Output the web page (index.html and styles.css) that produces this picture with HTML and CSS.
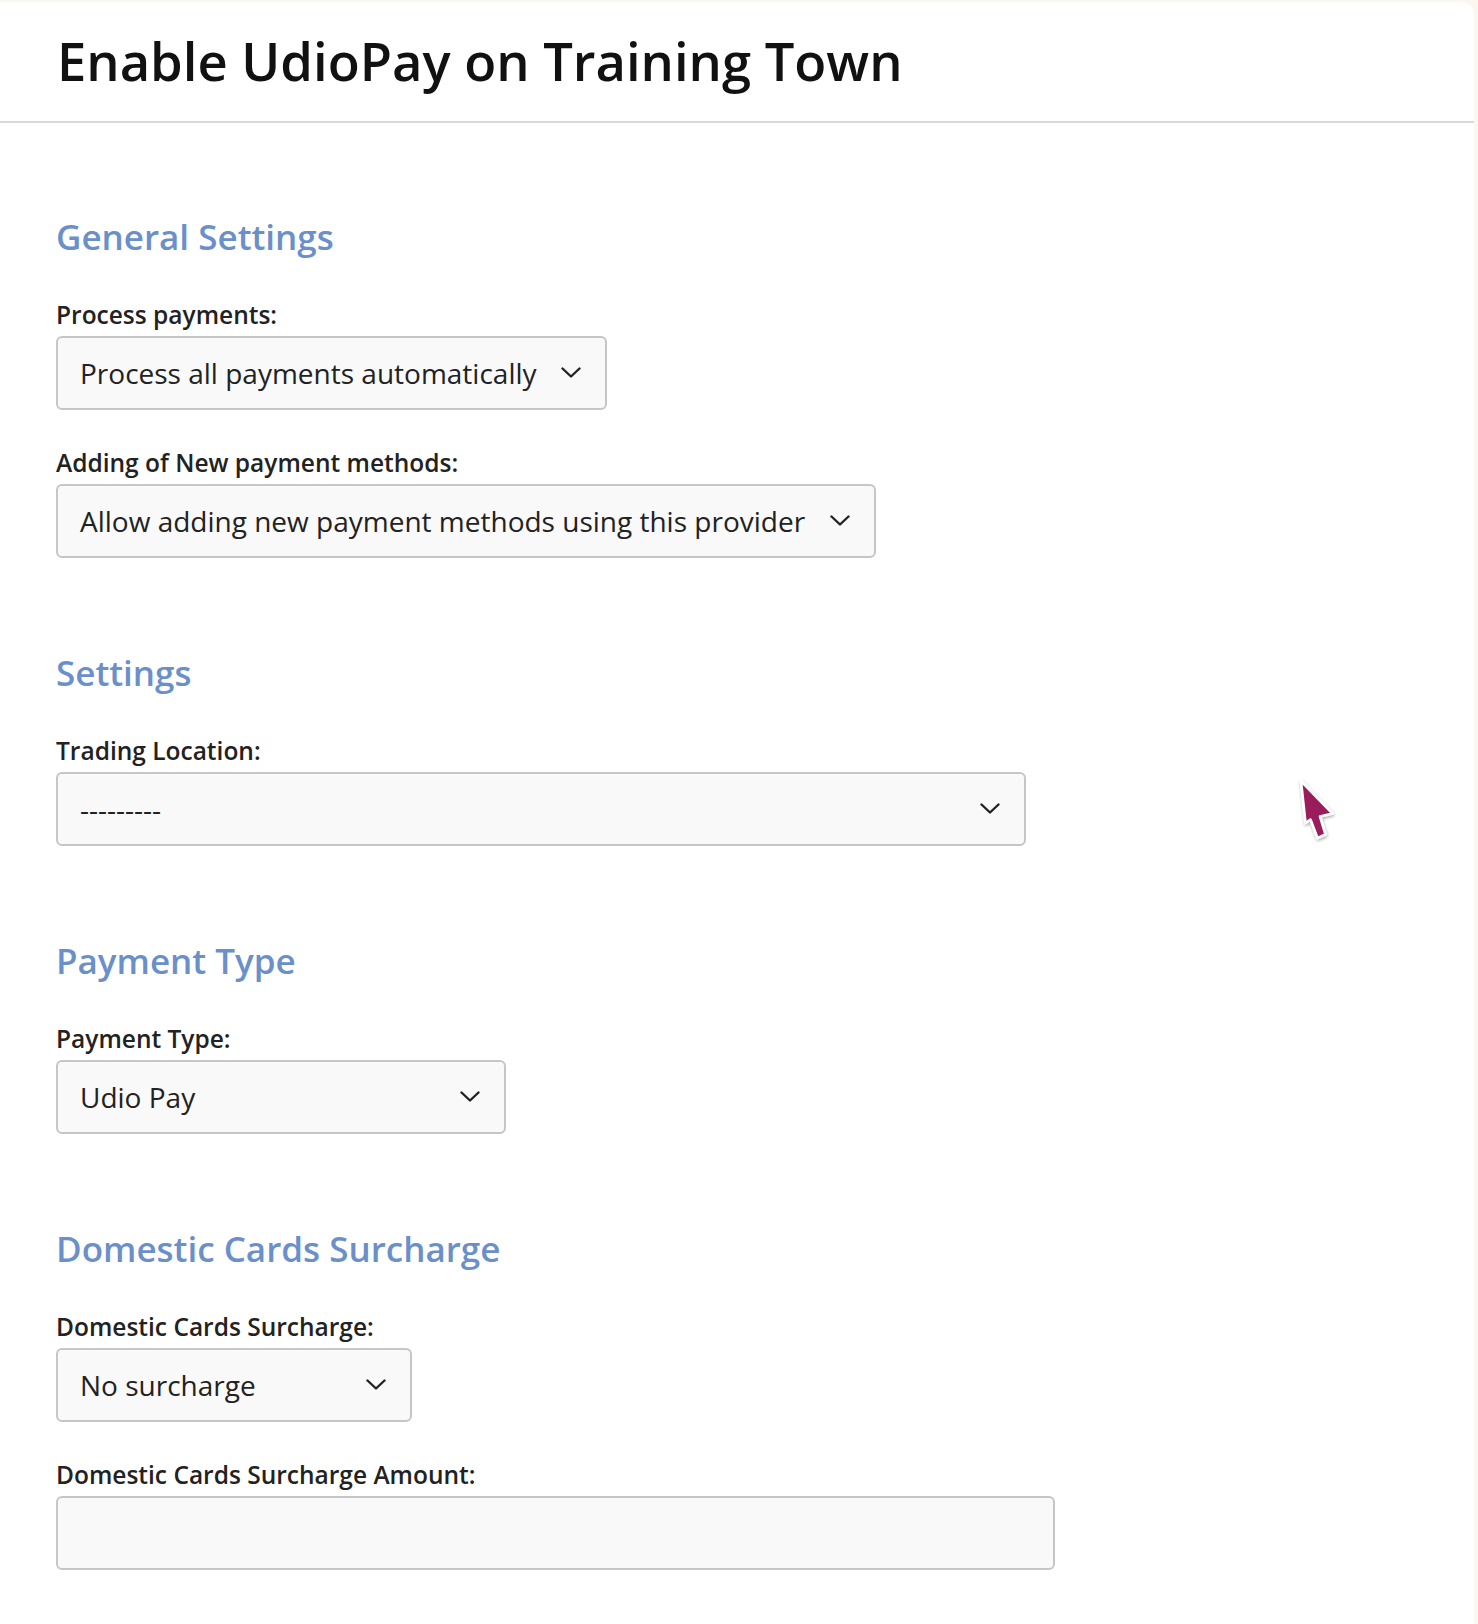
FILE: index.html
```html
<!DOCTYPE html>
<html lang="en">
<head>
<meta charset="utf-8">
<title>Enable UdioPay on Training Town</title>
<link rel="stylesheet" href="styles.css">
</head>
<body>
<div class="card">
  <header class="page-header">
    <h1 class="page-title">Enable UdioPay on Training Town</h1>
  </header>
  <main class="content">
    <section class="section">
      <h2 class="section-title">General Settings</h2>
      <div class="field">
        <label class="field-label">Process payments:</label>
        <div class="select w-551">
          <span class="select-value">Process all payments automatically</span>
          <svg class="chevron" viewBox="0 0 20 11" width="20" height="11"><path d="M1.5 1.5 L10 9.5 L18.5 1.5" fill="none" stroke="#222" stroke-width="2.4" stroke-linecap="round" stroke-linejoin="round"/></svg>
        </div>
      </div>
      <div class="field">
        <label class="field-label">Adding of New payment methods:</label>
        <div class="select w-820">
          <span class="select-value">Allow adding new payment methods using this provider</span>
          <svg class="chevron" viewBox="0 0 20 11" width="20" height="11"><path d="M1.5 1.5 L10 9.5 L18.5 1.5" fill="none" stroke="#222" stroke-width="2.4" stroke-linecap="round" stroke-linejoin="round"/></svg>
        </div>
      </div>
    </section>
    <section class="section">
      <h2 class="section-title">Settings</h2>
      <div class="field">
        <label class="field-label">Trading Location:</label>
        <div class="select w-970">
          <span class="select-value">---------</span>
          <svg class="chevron" viewBox="0 0 20 11" width="20" height="11"><path d="M1.5 1.5 L10 9.5 L18.5 1.5" fill="none" stroke="#222" stroke-width="2.4" stroke-linecap="round" stroke-linejoin="round"/></svg>
        </div>
      </div>
    </section>
    <section class="section">
      <h2 class="section-title">Payment Type</h2>
      <div class="field">
        <label class="field-label">Payment Type:</label>
        <div class="select w-450">
          <span class="select-value">Udio Pay</span>
          <svg class="chevron" viewBox="0 0 20 11" width="20" height="11"><path d="M1.5 1.5 L10 9.5 L18.5 1.5" fill="none" stroke="#222" stroke-width="2.4" stroke-linecap="round" stroke-linejoin="round"/></svg>
        </div>
      </div>
    </section>
    <section class="section">
      <h2 class="section-title">Domestic Cards Surcharge</h2>
      <div class="field">
        <label class="field-label">Domestic Cards Surcharge:</label>
        <div class="select w-356">
          <span class="select-value">No surcharge</span>
          <svg class="chevron" viewBox="0 0 20 11" width="20" height="11"><path d="M1.5 1.5 L10 9.5 L18.5 1.5" fill="none" stroke="#222" stroke-width="2.4" stroke-linecap="round" stroke-linejoin="round"/></svg>
        </div>
      </div>
      <div class="field">
        <label class="field-label">Domestic Cards Surcharge Amount:</label>
        <input class="text-input w-999" type="text">
      </div>
    </section>
  </main>
  <svg class="cursor" viewBox="0 0 46 72" width="46" height="72">
    <defs>
      <filter id="sh" x="-30%" y="-30%" width="160%" height="160%">
        <feDropShadow dx="0.5" dy="1.5" stdDeviation="1.5" flood-color="#000" flood-opacity="0.35"/>
      </filter>
    </defs>
    <polygon points="6,5 10.5,47 15.5,43.5 22.5,62 30.5,58.5 25,40.5 37.5,37.5" fill="#9b1b5a" stroke="#fff" stroke-width="2.6" stroke-linejoin="round" filter="url(#sh)"/>
  </svg>
</div>
</body>
</html>
```

FILE: styles.css
```css
html, body {
  margin: 0;
  padding: 0;
}
body {
  background: #fcf6f1;
  font-family: "Open Sans", "Noto Sans", sans-serif;
  color: #222;
}
.card {
  position: relative;
  margin-top: 2px;
  width: 1474px;
  min-height: 1622px;
  background: #fff;
  border-top-right-radius: 12px;
}
.page-header {
  padding: 26px 57px 27px;
  border-bottom: 2px solid #d8d8d8;
}
.page-title {
  margin: 0;
  font-size: 52.5px;
  line-height: 66px;
  font-weight: 600;
  color: #111;
}
.content {
  padding: 0 57px 40px 56px;
}
.section {
  padding-top: 94px;
}
.section:first-child {
  padding-top: 92.5px;
}
.section-title {
  margin: 0 0 43px;
  font-size: 35px;
  line-height: 42px;
  font-weight: 600;
  color: #6b8fc9;
}
.field {
  margin-bottom: 39px;
}
.field:last-child {
  margin-bottom: 0;
}
.field-label {
  display: block;
  margin-bottom: 7px;
  font-size: 24.5px;
  line-height: 28px;
  font-weight: 600;
  color: #222;
}
.select,
.text-input {
  box-sizing: border-box;
  height: 74px;
  border: 2px solid #c6c6c6;
  border-radius: 6px;
  background: #f9f9f9;
}
.select {
  display: flex;
  align-items: center;
  justify-content: space-between;
  padding: 0 24px 0 22px;
}
.select-value {
  font-size: 28px;
  color: #222;
  white-space: nowrap;
}
.chevron {
  flex: none;
  display: block;
}
.text-input {
  display: block;
  margin: 0;
  padding: 0 22px;
  font: inherit;
  font-size: 28px;
}
.w-551 { width: 551px; }
.w-820 { width: 820px; }
.w-970 { width: 970px; }
.w-450 { width: 450px; }
.w-356 { width: 356px; }
.w-999 { width: 999px; }
.cursor {
  position: absolute;
  left: 1295px;
  top: 774px;
  overflow: visible;
}
```
